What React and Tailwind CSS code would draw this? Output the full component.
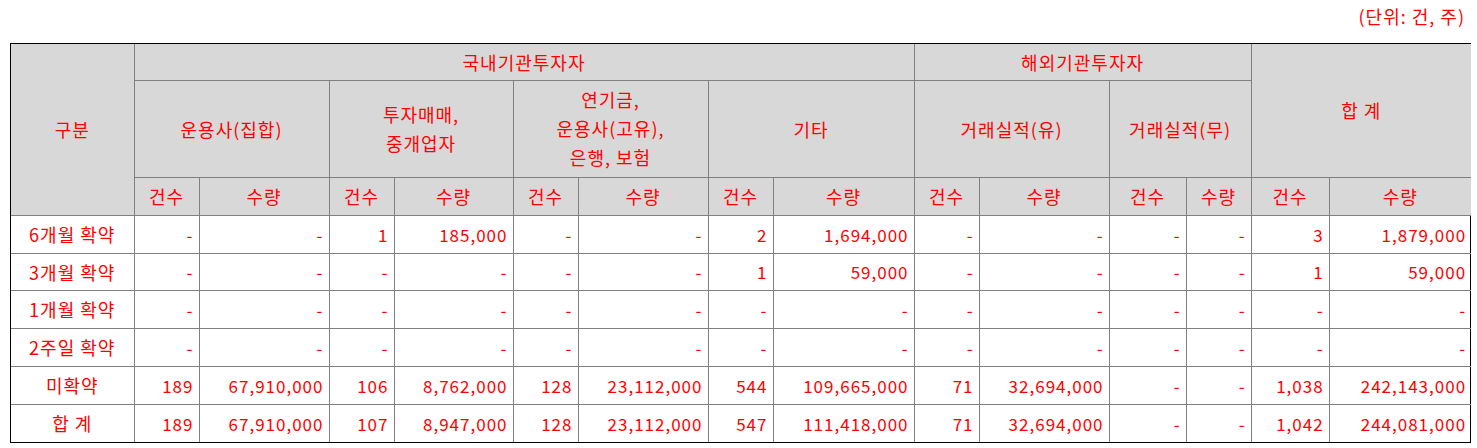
import React from 'react';

const widths = [123, 65, 130, 65, 119, 65, 130, 65, 141, 65, 130, 77, 65, 78, 142];

const rows = [
  ['6개월 확약', '-', '-', '1', '185,000', '-', '-', '2', '1,694,000', '-', '-', '-', '-', '3', '1,879,000'],
  ['3개월 확약', '-', '-', '-', '-', '-', '-', '1', '59,000', '-', '-', '-', '-', '1', '59,000'],
  ['1개월 확약', '-', '-', '-', '-', '-', '-', '-', '-', '-', '-', '-', '-', '-', '-'],
  ['2주일 확약', '-', '-', '-', '-', '-', '-', '-', '-', '-', '-', '-', '-', '-', '-'],
  ['미확약', '189', '67,910,000', '106', '8,762,000', '128', '23,112,000', '544', '109,665,000', '71', '32,694,000', '-', '-', '1,038', '242,143,000'],
  ['합 계', '189', '67,910,000', '107', '8,947,000', '128', '23,112,000', '547', '111,418,000', '71', '32,694,000', '-', '-', '1,042', '244,081,000'],
];

const rowHeights = ['h-[38px]', 'h-[37px]', 'h-[38px]', 'h-[38px]', 'h-[38px]', 'h-[38px]'];

const th = 'border border-[#808080] bg-[#d8d8d8] text-center font-normal align-middle p-0 text-[18px]';
const td = 'border border-[#808080] text-right align-middle pr-[5px] pl-0';

export default function App() {
  return (
    <div className="w-[1477px] h-[448px] bg-white text-[#ff0000] text-[17px] tracking-[1px] font-['Noto_Sans_CJK_KR',sans-serif] leading-none">
      <div className="flex justify-end pr-[12px] pt-[7px] h-[43px] text-[18px]">(단위: 건, 주)</div>
      <div className="ml-[10px] w-[1461px] border border-black">
        <table className="w-full table-fixed border-collapse border-hidden">
          <colgroup>
            {widths.map((w, i) => (
              <col key={i} style={{ width: w }} />
            ))}
          </colgroup>
          <thead>
            <tr className="h-[36px]">
              <th rowSpan={3} className={th}>구분</th>
              <th colSpan={8} className={th}>국내기관투자자</th>
              <th colSpan={4} className={th}>해외기관투자자</th>
              <th colSpan={2} rowSpan={2} className={th}>합 계</th>
            </tr>
            <tr className="h-[97px]">
              <th colSpan={2} className={th}>운용사(집합)</th>
              <th colSpan={2} className={`${th} leading-[29px]`}>투자매매,<br />중개업자</th>
              <th colSpan={2} className={`${th} leading-[29px]`}>연기금,<br />운용사(고유),<br />은행, 보험</th>
              <th colSpan={2} className={th}>기타</th>
              <th colSpan={2} className={th}>거래실적(유)</th>
              <th colSpan={2} className={th}>거래실적(무)</th>
            </tr>
            <tr className="h-[38px]">
              {Array.from({ length: 7 }).map((_, i) => (
                <React.Fragment key={i}>
                  <th className={th}>건수</th>
                  <th className={th}>수량</th>
                </React.Fragment>
              ))}
            </tr>
          </thead>
          <tbody>
            {rows.map((r, i) => (
              <tr key={i} className={rowHeights[i]}>
                {r.map((c, j) =>
                  j === 0 ? (
                    <td key={j} className="border border-[#808080] text-center align-middle p-0 text-[18px]">{c}</td>
                  ) : (
                    <td key={j} className={td}>{c}</td>
                  )
                )}
              </tr>
            ))}
          </tbody>
        </table>
      </div>
    </div>
  );
}
